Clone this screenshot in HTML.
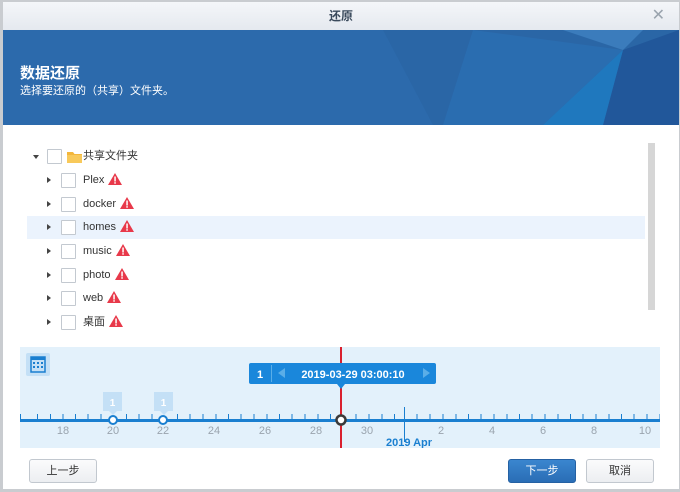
<!DOCTYPE html>
<html><head><meta charset="utf-8"><style>
*{margin:0;padding:0;box-sizing:border-box}
body{width:680px;height:492px;overflow:hidden;background:#c9ccd0;font-family:"Liberation Sans","Noto Sans CJK SC",sans-serif;position:relative}
.dlg{position:absolute;left:3px;top:2px;width:676px;height:487px;background:#fff}
.title{position:absolute;left:0;top:0;width:676px;height:28px;background:linear-gradient(#f4f6f9,#e5e9ef);text-align:center;font-size:12px;line-height:28px;color:#3a4a5c;font-weight:bold}
.x{position:absolute;right:14px;top:0;font-size:16px;color:#9aa4ae;font-weight:normal}
.ban{position:absolute;left:0;top:28px;width:676px;height:95px;background:#2c6aac;overflow:hidden}
.ban h1{position:absolute;left:17px;top:32px;color:#fff;font-size:15px;font-weight:bold}
.ban p{position:absolute;left:17px;top:52px;color:#fff;font-size:11px}
.row{position:absolute;left:24px;height:23px;width:618px;font-size:11px;color:#333;line-height:23px}
.row.sel{background:#ebf3fd}
.tri{position:absolute;left:20px;top:8px;width:0;height:0;border-left:4px solid #444;border-top:3.5px solid transparent;border-bottom:3.5px solid transparent}
.cb{position:absolute;left:34px;top:4px;width:15px;height:15px;border:1px solid #c3c9d0;background:#fff;border-radius:1px}
.lbl{position:absolute;left:56px;top:0}
.warn{display:inline-block;vertical-align:middle;margin-left:4px;margin-top:-2px}
.tl{position:absolute;left:17px;top:345px;width:640px;height:101px;background:#e3f1fb;overflow:hidden}
.lab{position:absolute;top:78px;font-size:11px;color:#9aa4ae;width:30px;margin-left:-18px;text-align:center}
.btn{position:absolute;top:457px;width:68px;height:24px;border:1px solid #c2c8cf;border-radius:3px;background:linear-gradient(#fbfbfc,#eceef1);font-size:11px;text-align:center;line-height:22px;color:#333}
</style></head><body>
<div class="dlg">
<div class="title">还原<span class="x">✕</span></div>
<div class="ban">
<svg width="676" height="95" style="position:absolute;left:0;top:0">
<polygon points="380,0 676,0 676,95 430,95" fill="#2a66a6"/>
<polygon points="470,0 620,20 540,95 440,95" fill="#2a6db0"/>
<polygon points="620,20 676,0 676,95 600,95" fill="#21579a"/>
<polygon points="540,95 620,20 600,95" fill="#1f78be"/>
<polygon points="560,0 640,0 620,20" fill="#3b7cbc"/>
</svg>
<h1>数据还原</h1><p>选择要还原的（共享）文件夹。</p></div>
<div style="position:absolute;left:0;top:123px;width:676px;height:214px;overflow:hidden">
<div class="row" style="top:20px"><div class="tri" style="left:6px;top:10px;border-top:4px solid #444;border-left:3.5px solid transparent;border-right:3.5px solid transparent;border-bottom:0"></div><div class="cb" style="left:20px"></div><svg style="position:absolute;left:40px;top:6px" width="15" height="12"><path d="M0 1h6l1.5 2H15v9H0z" fill="#f3b63b"/><rect x="0" y="4" width="15" height="8" fill="#f8c95a"/></svg><span class="lbl" style="left:56px">共享文件夹</span></div>
<div class="row" style="top:44px"><div class="tri"></div><div class="cb"></div><span class="lbl">Plex<svg class="warn" width="14" height="12"><path d="M7 0L14 12H0z" fill="#e8394a"/><rect x="6.3" y="3.5" width="1.5" height="5" fill="#fff"/><rect x="6.3" y="9.2" width="1.5" height="1.5" fill="#fff"/></svg></span></div>
<div class="row" style="top:68px"><div class="tri"></div><div class="cb"></div><span class="lbl">docker<svg class="warn" width="14" height="12"><path d="M7 0L14 12H0z" fill="#e8394a"/><rect x="6.3" y="3.5" width="1.5" height="5" fill="#fff"/><rect x="6.3" y="9.2" width="1.5" height="1.5" fill="#fff"/></svg></span></div>
<div class="row sel" style="top:91px"><div class="tri"></div><div class="cb"></div><span class="lbl">homes<svg class="warn" width="14" height="12"><path d="M7 0L14 12H0z" fill="#e8394a"/><rect x="6.3" y="3.5" width="1.5" height="5" fill="#fff"/><rect x="6.3" y="9.2" width="1.5" height="1.5" fill="#fff"/></svg></span></div>
<div class="row" style="top:115px"><div class="tri"></div><div class="cb"></div><span class="lbl">music<svg class="warn" width="14" height="12"><path d="M7 0L14 12H0z" fill="#e8394a"/><rect x="6.3" y="3.5" width="1.5" height="5" fill="#fff"/><rect x="6.3" y="9.2" width="1.5" height="1.5" fill="#fff"/></svg></span></div>
<div class="row" style="top:139px"><div class="tri"></div><div class="cb"></div><span class="lbl">photo<svg class="warn" width="14" height="12"><path d="M7 0L14 12H0z" fill="#e8394a"/><rect x="6.3" y="3.5" width="1.5" height="5" fill="#fff"/><rect x="6.3" y="9.2" width="1.5" height="1.5" fill="#fff"/></svg></span></div>
<div class="row" style="top:162px"><div class="tri"></div><div class="cb"></div><span class="lbl">web<svg class="warn" width="14" height="12"><path d="M7 0L14 12H0z" fill="#e8394a"/><rect x="6.3" y="3.5" width="1.5" height="5" fill="#fff"/><rect x="6.3" y="9.2" width="1.5" height="1.5" fill="#fff"/></svg></span></div>
<div class="row" style="top:186px"><div class="tri"></div><div class="cb"></div><span class="lbl">桌面<svg class="warn" width="14" height="12"><path d="M7 0L14 12H0z" fill="#e8394a"/><rect x="6.3" y="3.5" width="1.5" height="5" fill="#fff"/><rect x="6.3" y="9.2" width="1.5" height="1.5" fill="#fff"/></svg></span></div>
<div class="row" style="top:210px"><div class="tri"></div><div class="cb"></div></div>
<div style="position:absolute;left:645px;top:18px;width:7px;height:167px;background:#d6d6d6"></div>
</div>
<div class="tl">
<svg width="646" height="101" style="position:absolute;left:-3px;top:0">
<rect x="9" y="6" width="24" height="23" rx="2" fill="#c4e0f6"/>
<rect x="14" y="10" width="14" height="15" fill="none" stroke="#1a7fd0" stroke-width="1.5"/>
<rect x="14" y="10" width="14" height="3" fill="#1a7fd0"/>
<g fill="#1a7fd0"><rect x="16" y="15" width="2" height="2"/><rect x="20" y="15" width="2" height="2"/><rect x="24" y="15" width="2" height="2"/><rect x="16" y="19" width="2" height="2"/><rect x="20" y="19" width="2" height="2"/><rect x="24" y="19" width="2" height="2"/></g>
<rect x="-10" y="45" width="13" height="19" fill="#c4e0f6"/>
<rect x="86" y="45" width="19" height="19" fill="#c4e0f6"/><path d="M92 64l4 4 4-4z" fill="#c4e0f6"/>
<text x="95.5" y="59" font-size="10" font-weight="bold" fill="#fff" text-anchor="middle" font-family="Liberation Sans">1</text>
<rect x="137" y="45" width="19" height="19" fill="#c4e0f6"/><path d="M143 64l4 4 4-4z" fill="#c4e0f6"/>
<text x="146.5" y="59" font-size="10" font-weight="bold" fill="#fff" text-anchor="middle" font-family="Liberation Sans">1</text>
<rect x="0" y="72" width="646" height="3" fill="#1a7fd0"/>
<g stroke="#1a7fd0" stroke-width="1">
<path d="M3.5 67v5M20.5 67v5M33.5 67v5M46 67v5M58.5 67v5M71 67v5M84 67v5M109.5 67v5M122 67v5M135 67v5M160.5 67v5M173 67v5M186 67v5M199 67v5M211.5 67v5M224 67v5M237 67v5M250 67v5M262.5 67v5M275 67v5M288 67v5M301 67v5M313.5 67v5M339 67v5M352 67v5M365 67v5M377.5 67v5M400 67v5M413 67v5M426 67v5M439 67v5M451.5 67v5M464 67v5M477 67v5M490 67v5M502.5 67v5M515 67v5M528 67v5M541 67v5M553.5 67v5M566 67v5M579 67v5M592 67v5M604.5 67v5M617 67v5M630 67v5M643 67v5"/>
<path d="M387.5 60v35"/></g>
<circle cx="96" cy="73" r="4" fill="#fff" stroke="#1a7fd0" stroke-width="2"/>
<circle cx="146" cy="73" r="4" fill="#fff" stroke="#1a7fd0" stroke-width="2"/>
<rect x="323" y="0" width="2" height="101" fill="#d9202e"/>
<circle cx="324" cy="73" r="4.5" fill="#fff" stroke="#3a3a3a" stroke-width="2.5"/>
<rect x="232" y="16" width="187" height="21" rx="2" fill="#1a87db"/>
<path d="M320 37l4 5 4-5z" fill="#1a87db"/>
<line x1="254.5" y1="18" x2="254.5" y2="35" stroke="#5aaee8"/>
<text x="243" y="31" font-size="11" font-weight="bold" fill="#fff" text-anchor="middle" font-family="Liberation Sans">1</text>
<path d="M268 21l-7 5 7 5z" fill="#5aaee8"/><path d="M406 21l7 5-7 5z" fill="#5aaee8"/>
<text x="336" y="31" font-size="11" font-weight="bold" fill="#fff" text-anchor="middle" font-family="Liberation Sans">2019-03-29 03:00:10</text>
<text x="392" y="99" font-size="11" font-weight="bold" fill="#1a7fd0" text-anchor="middle" font-family="Liberation Sans">2019 Apr</text>
</svg>
<div class="lab" style="left:46px">18</div><div class="lab" style="left:96px">20</div><div class="lab" style="left:146px">22</div><div class="lab" style="left:197px">24</div><div class="lab" style="left:248px">26</div><div class="lab" style="left:299px">28</div><div class="lab" style="left:350px">30</div><div class="lab" style="left:424px">2</div><div class="lab" style="left:475px">4</div><div class="lab" style="left:526px">6</div><div class="lab" style="left:577px">8</div><div class="lab" style="left:628px">10</div>
</div>
<div class="btn" style="left:26px">上一步</div>
<div class="btn" style="left:505px;background:linear-gradient(#3a86cf,#2a6db5);border-color:#2561a3;color:#fff">下一步</div>
<div class="btn" style="left:583px">取消</div>
</div>
</body></html>
